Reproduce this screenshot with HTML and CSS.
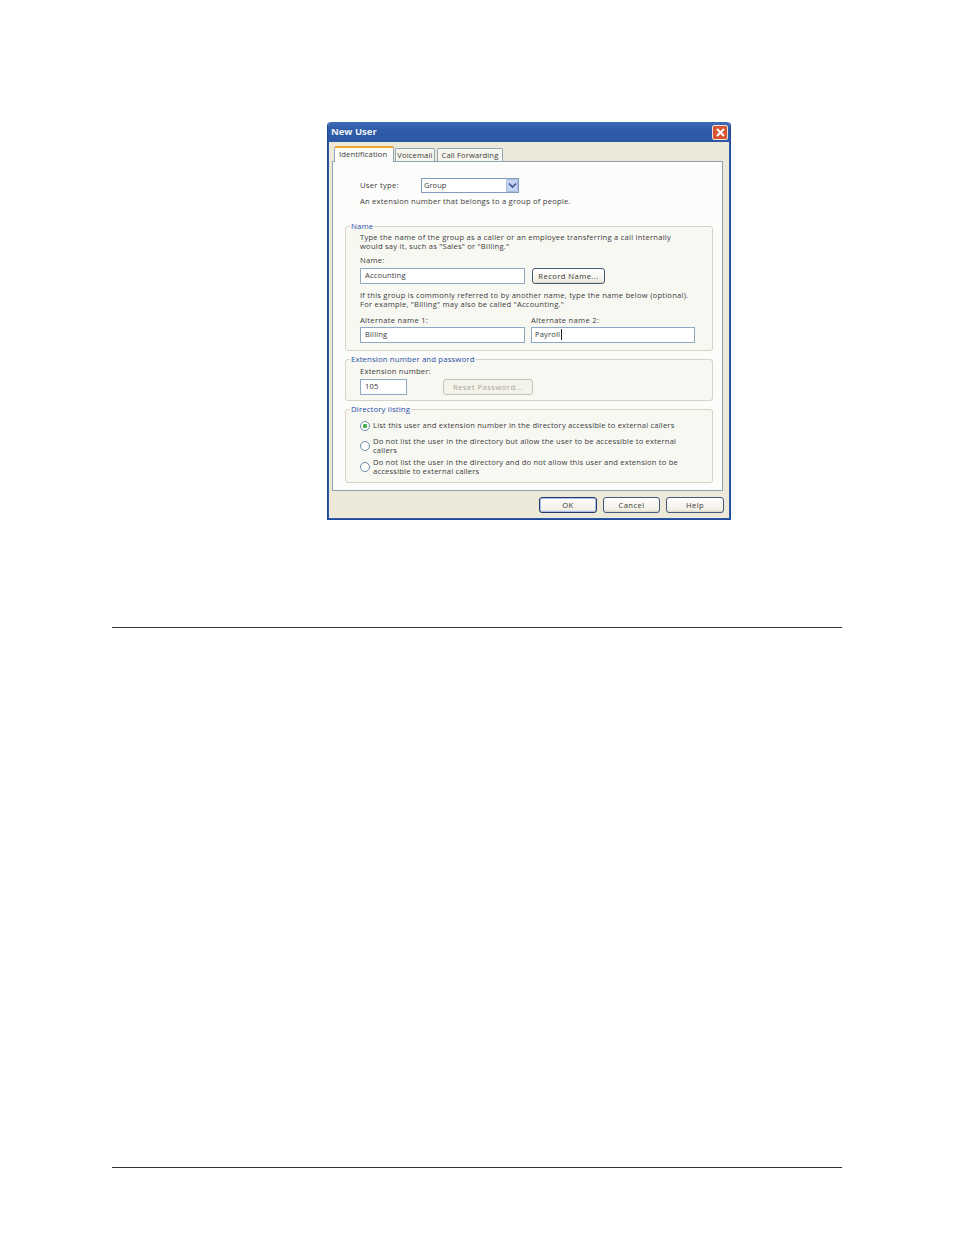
FILE: index.html
```html
<!DOCTYPE html>
<html lang="en">
<head>
<meta charset="utf-8">
<title>New User</title>
<link rel="stylesheet" href="styles.css">
</head>
<body>
<main class="page">
  <section class="dialog">
    <header class="titlebar">
      <span class="title">New User</span>
      <span class="close">
        <svg width="11" height="11" viewBox="0 0 11 11"><path d="M2 2l7 7M9 2l-7 7" stroke="#fff" stroke-width="2" fill="none"/></svg>
      </span>
    </header>
    <div class="client">
      <nav class="tabs">
        <span class="tab active">Identification</span>
        <span class="tab narrow">Voicemail</span>
        <span class="tab">Call Forwarding</span>
      </nav>
      <div class="panel">
        <div class="type-row">
          <span class="type-label">User type:</span>
          <span class="select"><span>Group</span>
            <span class="arrow"><svg width="9" height="7" viewBox="0 0 9 7"><path d="M1 1.500l3.500 3.500 3.500-3.500" stroke="#3b5a94" stroke-width="1.700" fill="none"/></svg></span>
          </span>
        </div>
        <p class="text type-desc">An extension number that belongs to a group of people.</p>

        <fieldset class="group name-group">
          <legend>Name</legend>
          <p class="text">Type the name of the group as a caller or an employee transferring a call internally<br>would say it, such as "Sales" or "Billing."</p>
          <p class="text name-label">Name:</p>
          <div class="row">
            <span class="input wide">Accounting</span>
            <span class="btn record">Record Name...</span>
          </div>
          <p class="text alt-note">If this group is commonly referred to by another name, type the name below (optional).<br>For example, "Billing" may also be called "Accounting."</p>
          <div class="alt-labels">
            <span class="text alt-label">Alternate name 1:</span>
            <span class="text alt-label">Alternate name 2:</span>
          </div>
          <div class="row alt-row">
            <span class="input wide">Billing</span>
            <span class="input alt-two"><span>Payroll</span><span class="caret"></span></span>
          </div>
        </fieldset>

        <fieldset class="group ext-group">
          <legend>Extension number and password</legend>
          <p class="text">Extension number:</p>
          <div class="row ext-row">
            <span class="input short">105</span>
            <span class="btn disabled">Reset Password...</span>
          </div>
        </fieldset>

        <fieldset class="group dir-group">
          <legend>Directory listing</legend>
          <div class="radio-row first"><span class="radio on"></span><span class="text radio-text">List this user and extension number in the directory accessible to external callers</span></div>
          <div class="radio-row"><span class="radio"></span><span class="text radio-text">Do not list the user in the directory but allow the user to be accessible to external<br>callers</span></div>
          <div class="radio-row third"><span class="radio"></span><span class="text radio-text">Do not list the user in the directory and do not allow this user and extension to be<br>accessible to external callers</span></div>
        </fieldset>
      </div>
      <footer class="actions">
        <span class="btn action default">OK</span>
        <span class="btn action cancel">Cancel</span>
        <span class="btn action">Help</span>
      </footer>
    </div>
  </section>
  <hr class="rule rule-top">
  <hr class="rule rule-bottom">
</main>
</body>
</html>
```
FILE: styles.css
```css
* { box-sizing: border-box; }
html, body { margin: 0; background: #fff; }
body { font-family: "Open Sans", "DejaVu Sans", sans-serif; color: #3a3a3a; }
.page { width: 954px; height: 1235px; padding-top: 122px; overflow: hidden; }

.dialog { width: 404px; height: 398px; margin-left: 327px; border: 1px solid #1f4a9c; border-top: 0; border-radius: 4px 4px 0 0; background: #ece9d8; display: flex; flex-direction: column; }
.titlebar { height: 20px; flex: none; display: flex; align-items: center; justify-content: space-between; padding: 0 2px 0 3px; background: linear-gradient(#3f6cb8, #2f5aa8 40%, #2c58a6); border-radius: 4px 4px 0 0; }
.title { font: bold 9.500px/1 "Open Sans", sans-serif; color: #eef2fa; }
.close { width: 16px; height: 15px; border: 1px solid #f0e0da; border-radius: 2px; background: #d9552f; display: flex; align-items: center; justify-content: center; }

.client { flex: 1; border: 1px solid #2c58a6; border-top: 0; padding-left: 3px; display: flex; flex-direction: column; min-height: 0; }
.tabs { height: 19px; display: flex; align-items: flex-end; padding: 4px 0 0 2px; flex: none; }
.tab { font-size: 7.600px; line-height: 11px; height: 13px; padding: 1px 4px 0 3px; margin-right: 1px; background: #f6f5ee; border: 1px solid #91a7b4; border-bottom: 0; border-radius: 2px 2px 0 0; letter-spacing: .13px; }
.tab.active { height: 16px; padding: 1px 6px 0 4px; margin-bottom: -1px; background: #fcfcfa; border-top: 2px solid #eda42c; position: relative; }
.tab.narrow { padding-left: 1px; padding-right: 2px; margin-right: 2px; }
.panel { width: 391px; height: 330px; flex: none; background: #fcfcfa; border: 1px solid #8ea3ae; padding: 15px 9px 0 12px; }

.text { margin: 0; font-size: 7.600px; line-height: 9px; letter-spacing: .23px; }
.type-row { display: flex; align-items: center; height: 16px; padding-left: 15px; }
.type-label { font-size: 7.600px; width: 61px; letter-spacing: .3px; }
.select { width: 98px; height: 15px; border: 1px solid #7f9db9; background: #fff; font-size: 7.600px; display: flex; justify-content: space-between; align-items: center; padding-left: 2px; }
.arrow { width: 12px; height: 13px; background: #c6d4f2; border: 1px solid #a8bde4; border-radius: 1px; display: flex; align-items: center; justify-content: center; }
.type-desc { margin: 4px 0 0 15px; }

.group { margin: 0; padding: 0 0 0 14px; border: 1px solid #d6d3c6; border-radius: 3px; min-width: 0; background: #f8f8f3; }
.group legend { margin-left: -10px; padding: 0 1px; font-size: 7.800px; line-height: 9px; color: #2a4fa8; letter-spacing: .13px; }
.name-group { width: 368px; height: 129px; margin-top: 16px; padding-top: 2px; }
.name-label { margin-top: 5px; }
.row { display: flex; margin-top: 3px; }
.input { height: 16px; border: 1px solid #8fa9c2; background: #fff; font-size: 7.600px; line-height: 12px; padding-left: 4px; letter-spacing: .13px; display: flex; }
.wide { width: 165px; }
.alt-two { width: 164px; padding-left: 3px; }
.short { width: 47px; }
.caret { width: 1px; height: 11px; margin: 1px 0 0 1px; background: #222; }
.btn { height: 16px; border: 1px solid #46597a; border-radius: 3px; background: linear-gradient(#fff, #f1efe5 85%, #dcd8c8); font-size: 7.600px; line-height: 14px; text-align: center; letter-spacing: .45px; }
.record { width: 73px; margin-left: 7px; }
.alt-note { margin-top: 7px; }
.alt-labels { display: flex; margin-top: 7px; }
.alt-label { width: 171px; letter-spacing: .3px; }
.alt-row { gap: 6px; margin-top: 2px; }

.ext-group { width: 368px; height: 46px; margin-top: 4px; padding-top: 3px; }
.ext-row { gap: 36px; margin-top: 3px; }
.disabled { width: 90px; border-color: #c5c3b5; color: #a8a698; background: #f4f3ea; letter-spacing: .5px; }

.dir-group { width: 368px; height: 78px; margin-top: 4px; padding-top: 7px; }
.radio-row { display: flex; align-items: center; height: 18px; }
.radio-row.first { height: 9px; margin-bottom: 7px; }
.radio-row.third { margin-top: 3px; }
.radio-text { letter-spacing: .19px; }
.radio { width: 10px; height: 10px; flex: none; margin-right: 3px; border: 1px solid #6d8ca8; border-radius: 50%; background: #fff; }
.radio.on { background: radial-gradient(circle, #4caf50 0 2px, #fff 2.500px); }

.actions { height: 24px; display: flex; justify-content: flex-end; gap: 6px; padding-top: 6px; flex: none; width: 392px; }
.action { width: 58px; }
.cancel { width: 57px; }
.default { border: 1px solid #24386c; box-shadow: inset 0 0 0 1px #a9c0ea; }

.rule { position: absolute; left: 112px; width: 730px; height: 1px; margin: 0; border: 0; background: #333; }
.rule-top { top: 627px; }
.rule-bottom { top: 1167px; }
```
